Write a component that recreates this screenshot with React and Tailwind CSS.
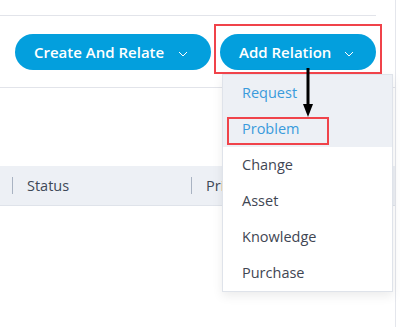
import React from 'react';

function Chevron() {
  return (
    <svg width="10" height="6" viewBox="0 0 10 6" fill="none" className="mt-[3px]">
      <path d="M1 1l4 4 4-4" stroke="currentColor" strokeWidth="1" />
    </svg>
  );
}

const items = ['Request', 'Problem', 'Change', 'Asset', 'Knowledge', 'Purchase'];

export default function App() {
  return (
    <div
      className="relative w-[400px] h-[327px] bg-white overflow-hidden"
      style={{ fontFamily: '"Open Sans", "Noto Sans", sans-serif' }}
    >
      <div className="w-[396px] h-full border-r border-[#e4e6ec]">
        <div className="h-[16px] mr-[19px] border-b border-[#e2e4ea]" />
        <div className="flex justify-end gap-[9px] pr-[19px] pt-[18px] pb-[17px] border-b border-[#e2e4ea]">
          <button className="h-[36px] w-[196px] rounded-full bg-[#039fdd] text-white text-[15px] font-semibold flex items-center pl-[19px] gap-[14px]">
            Create And Relate
            <Chevron />
          </button>
          <button className="h-[36px] w-[156px] rounded-full bg-[#039fdd] text-white text-[15px] font-semibold flex items-center pl-[19px] gap-[13px]">
            Add Relation
            <Chevron />
          </button>
        </div>
        <div className="h-[78px]" />
        <div className="h-[40px] bg-[#edf0f5] border-b border-[#dfe3ea] flex items-center text-[14.5px] text-[#3e4857] font-medium">
          <div className="w-px h-[17px] bg-[#a9b3c2] ml-[12px]" />
          <span className="ml-[14px] w-[164px]">Status</span>
          <div className="w-px h-[17px] bg-[#a9b3c2]" />
          <span className="ml-[14px]">Priority</span>
        </div>
      </div>

      <div className="absolute left-[222px] top-[74px] w-[171px] h-[218px] bg-white border border-[#dfe3ea] shadow-[0_4px_10px_rgba(0,0,0,0.08)] text-[14.5px]">
        {items.map((it, i) => (
          <div
            key={it}
            className={
              'h-[36px] flex items-center pl-[19px] ' +
              (i < 2 ? 'bg-[#edf0f5] text-[#3a9bdc]' : 'text-[#3f4653]')
            }
          >
            {it}
          </div>
        ))}
      </div>

      <div className="absolute left-[214px] top-[24px] w-[168px] h-[50px] border-2 border-[#f0434a]" />
      <div className="absolute left-[227px] top-[117px] w-[102px] h-[28px] border-2 border-[#f0434a]" />

      <svg className="absolute left-[300px] top-[68px]" width="16" height="50" viewBox="0 0 16 50">
        <path d="M8 0V38" stroke="#000" strokeWidth="3" />
        <path d="M3 36L8 49L13 36Z" fill="#000" />
      </svg>
    </div>
  );
}
